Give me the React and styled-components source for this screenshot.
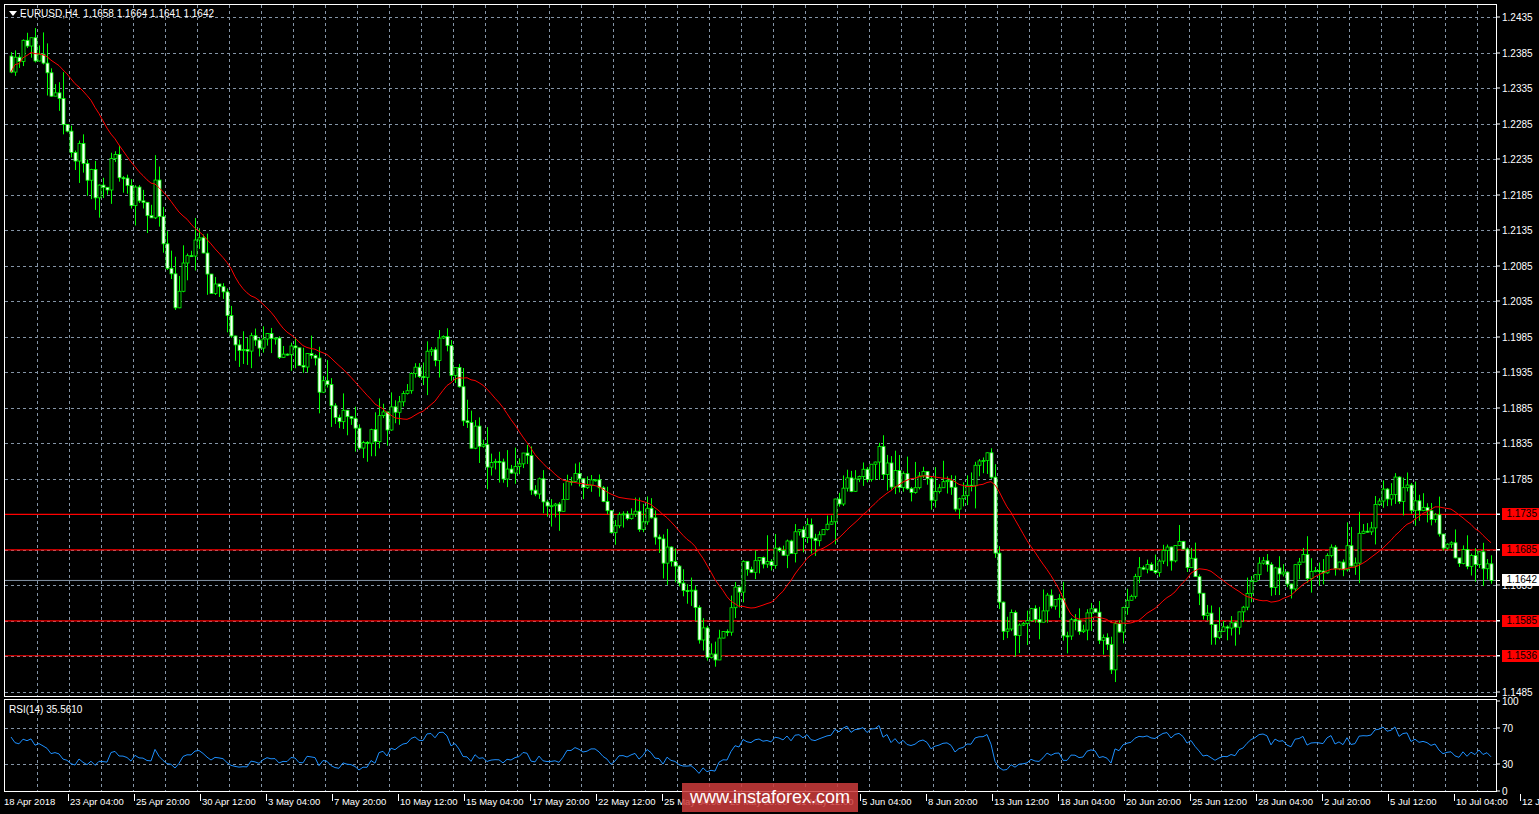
import React, { useMemo } from 'react'
import styled, { createGlobalStyle } from 'styled-components'

const Global = createGlobalStyle`
  html, body { margin: 0; background: #000; }
  body { font-family: "Liberation Sans", "DejaVu Sans", sans-serif; color: #fff; overflow: hidden; }
`

const W = 1493
const MAIN_H = 693
const RSI_H = 93
const TOP = 1.2435
const BOT = 1.1485
const py = (p) => 12 + ((TOP - p) / (TOP - BOT)) * 675
const ry = (v) => 6 + (100 - v) * 0.9 - 5

const keys = [
  [6, 1.238], [30, 1.2395], [45, 1.233], [60, 1.228], [90, 1.219], [110, 1.223], [140, 1.215], [150, 1.219],
  [170, 1.204], [190, 1.212], [230, 1.199], [260, 1.197], [300, 1.196], [330, 1.189], [360, 1.184],
  [380, 1.186], [400, 1.191], [440, 1.198], [460, 1.186], [490, 1.180], [520, 1.180], [550, 1.175],
  [580, 1.179], [610, 1.172], [640, 1.173], [660, 1.168], [680, 1.163], [700, 1.155], [715, 1.154],
  [730, 1.164], [760, 1.168], [800, 1.170], [830, 1.174], [870, 1.182], [890, 1.178], [920, 1.178],
  [950, 1.176], [985, 1.183], [990, 1.167], [1000, 1.157], [1020, 1.160], [1050, 1.161], [1060, 1.157],
  [1090, 1.159], [1105, 1.153], [1120, 1.163], [1150, 1.165], [1170, 1.170], [1190, 1.165], [1210, 1.156],
  [1230, 1.157], [1250, 1.167], [1280, 1.163], [1300, 1.166], [1340, 1.167], [1360, 1.170], [1380, 1.177],
  [1400, 1.176], [1430, 1.173], [1450, 1.168], [1470, 1.1665], [1488, 1.1642],
]

function interp(x) {
  for (let i = 1; i < keys.length; i++) {
    if (x <= keys[i][0]) {
      const [x0, y0] = keys[i - 1]
      const [x1, y1] = keys[i]
      return y0 + ((x - x0) / (x1 - x0)) * (y1 - y0)
    }
  }
  return keys[keys.length - 1][1]
}

function makeData() {
  let s = 11
  const rnd = () => { s = (s * 16807) % 2147483647; return s / 2147483647 }
  const bars = []
  let prev = 1.238
  for (let i = 0; i < 371; i++) {
    const x = 6 + i * 4
    const c = i === 370 ? 1.1642 : interp(x) + (rnd() - 0.5) * 0.0045
    const o = prev
    const h = Math.max(o, c) + rnd() * rnd() * 0.004
    const l = Math.min(o, c) - rnd() * rnd() * 0.004
    bars.push({ x, o, c, h, l })
    prev = c
  }
  const ma = bars.map((b, i) => {
    const from = Math.max(0, i - 19)
    const sl = bars.slice(from, i + 1)
    return sl.reduce((a, q) => a + q.c, 0) / sl.length
  })
  const rsi = []
  let ag = 0.001, al = 0.001
  bars.forEach((b, i) => {
    if (i === 0) { rsi.push(60); return }
    const d = b.c - bars[i - 1].c
    ag = (ag * 13 + Math.max(d, 0)) / 14
    al = (al * 13 + Math.max(-d, 0)) / 14
    rsi.push(100 - 100 / (1 + ag / al))
  })
  return { bars, ma, rsi }
}

const levels = [1.1735, 1.1685, 1.1585, 1.1536]
const priceTicks = Array.from({ length: 20 }, (_, i) => +(1.2435 - i * 0.005).toFixed(4))
const times = ['18 Apr 2018', '23 Apr 04:00', '25 Apr 20:00', '30 Apr 12:00', '3 May 04:00', '7 May 20:00',
  '10 May 12:00', '15 May 04:00', '17 May 20:00', '22 May 12:00', '25 May 04:00', '29 May 20:00',
  '31 May 12:00', '5 Jun 04:00', '8 Jun 20:00', '13 Jun 12:00', '18 Jun 04:00', '20 Jun 20:00',
  '25 Jun 12:00', '28 Jun 04:00', '2 Jul 20:00', '5 Jul 12:00', '10 Jul 04:00', '12 Jul 20:00']

const Terminal = styled.div`
  position: relative;
  width: 1539px;
  height: 814px;
  padding: 4px 0 0 4px;
  box-sizing: border-box;
  display: flex;
  flex-direction: column;
  gap: 2px;
  font-size: 10px;
`
const Row = styled.div`
  display: flex;
  height: ${(p) => p.h}px;
`
const Pane = styled.div`
  position: relative;
  width: ${W}px;
  flex: none;
  height: 100%;
  border: 1px solid #fff;
  box-sizing: border-box;
  svg { display: block; }
`
const Legend = styled.div`
  position: absolute;
  left: 4px;
  top: ${(p) => p.top}px;
  font-size: 10px;
  display: flex;
  align-items: center;
  gap: 3px;
  white-space: pre;
`
const Axis = styled.div`
  position: relative;
  flex: 1;
  height: 100%;
`
const Tick = styled.div`
  position: absolute;
  left: 0;
  top: ${(p) => p.y}px;
  display: flex;
  align-items: center;
  transform: translateY(-50%);
  &::before { content: ''; width: 3px; height: 1px; background: #fff; margin-right: 2px; }
`
const Tag = styled.span`
  background: ${(p) => p.bg};
  color: ${(p) => p.fg};
  padding: 0 3px 0 2px;
  line-height: 12px;
  width: 33px;
  text-align: right;
`
const TimeRow = styled.div`
  display: flex;
  height: 18px;
  width: ${W}px;
`
const TimeCell = styled.div`
  width: 64px;
  flex: none;
  display: flex;
  align-items: flex-start;
  white-space: nowrap;
  padding-top: 2px;
  border-left: 1px solid #fff;
  padding-left: 1px;
  height: 5px;
  font-size: 9.5px;
  &:first-child { border-left: none; padding-left: 0; }
`
const Watermark = styled.div`
  position: absolute;
  left: 682px;
  top: 783px;
  width: 176px;
  height: 29px;
  background: rgba(205, 60, 60, 0.85);
  color: #fff;
  font-size: 18px;
  display: flex;
  align-items: center;
  justify-content: center;
`

function Grid({ h, rows }) {
  const cols = []
  for (let x = 32; x < W; x += 32) cols.push(x)
  return (
    <g stroke="#8494a6" strokeDasharray="3 3" strokeWidth="1">
      {cols.map((x) => <line key={'v' + x} x1={x + 0.5} x2={x + 0.5} y1={0} y2={h} />)}
      {rows.map((y) => <line key={'h' + y} x1={0} x2={W} y1={y + 0.5} y2={y + 0.5} />)}
    </g>
  )
}

export default function App() {
  const { bars, ma, rsi } = useMemo(makeData, [])
  const maPath = bars.map((b, i) => `${i ? 'L' : 'M'}${b.x},${py(ma[i]).toFixed(1)}`).join('')
  const rsiPath = bars.map((b, i) => `${i ? 'L' : 'M'}${b.x},${ry(rsi[i]).toFixed(1)}`).join('')
  return (
    <Terminal>
      <Global />
      <Row h={MAIN_H}>
        <Pane>
          <svg width={W - 2} height={MAIN_H - 2}>
            <Grid h={MAIN_H} rows={priceTicks.map((p) => Math.round(py(p)))} />
            {levels.map((l) => (
              <line key={l} x1={0} x2={W} y1={py(l)} y2={py(l)} stroke="#ff0000" strokeWidth="1.2" />
            ))}
            <line x1={0} x2={W} y1={py(1.1642)} y2={py(1.1642)} stroke="#8494a6" />
            {bars.map((b, i) => {
              const top = py(Math.max(b.o, b.c))
              const bh = Math.max(1, Math.abs(py(b.o) - py(b.c)))
              return (
                <g key={i}>
                  <line x1={b.x + 0.5} x2={b.x + 0.5} y1={py(b.h)} y2={py(b.l)} stroke="#00ff00" />
                  <rect x={b.x - 1} y={top} width={3} height={bh} fill={b.c < b.o ? '#fff' : '#000'} stroke="#00ff00" strokeWidth="0.8" />
                </g>
              )
            })}
            <path d={maPath} fill="none" stroke="#ff0000" strokeWidth="1" />
          </svg>
          <Legend top={3}>
            <svg width="8" height="6"><path d="M0 0H8L4 5Z" fill="#fff" /></svg>
            {'EURUSD,H4  1.1658 1.1664 1.1641 1.1642'}
          </Legend>
        </Pane>
        <Axis>
          {priceTicks.map((p) => <Tick key={p} y={py(p) + 1}>{p.toFixed(4)}</Tick>)}
          {levels.map((l) => (
            <Tick key={'l' + l} y={py(l) + 1}><Tag bg="#ff0000" fg="#000">{l.toFixed(4)}</Tag></Tick>
          ))}
          <Tick y={py(1.1642) + 1}><Tag bg="#fff" fg="#000">1.1642</Tag></Tick>
        </Axis>
      </Row>
      <Row h={RSI_H}>
        <Pane>
          <svg width={W - 2} height={RSI_H - 2}>
            <Grid h={RSI_H} rows={[Math.round(ry(70)), Math.round(ry(30))]} />
            <path d={rsiPath} fill="none" stroke="#1e90ff" strokeWidth="1" />
          </svg>
          <Legend top={4}>RSI(14) 35.5610</Legend>
        </Pane>
        <Axis>
          {[100, 70, 30, 0].map((v) => <Tick key={v} y={ry(v) + 1}>{v}</Tick>)}
        </Axis>
      </Row>
      <TimeRow>
        {times.map((t) => <TimeCell key={t}>{t}</TimeCell>)}
      </TimeRow>
      <Watermark>www.instaforex.com</Watermark>
    </Terminal>
  )
}
